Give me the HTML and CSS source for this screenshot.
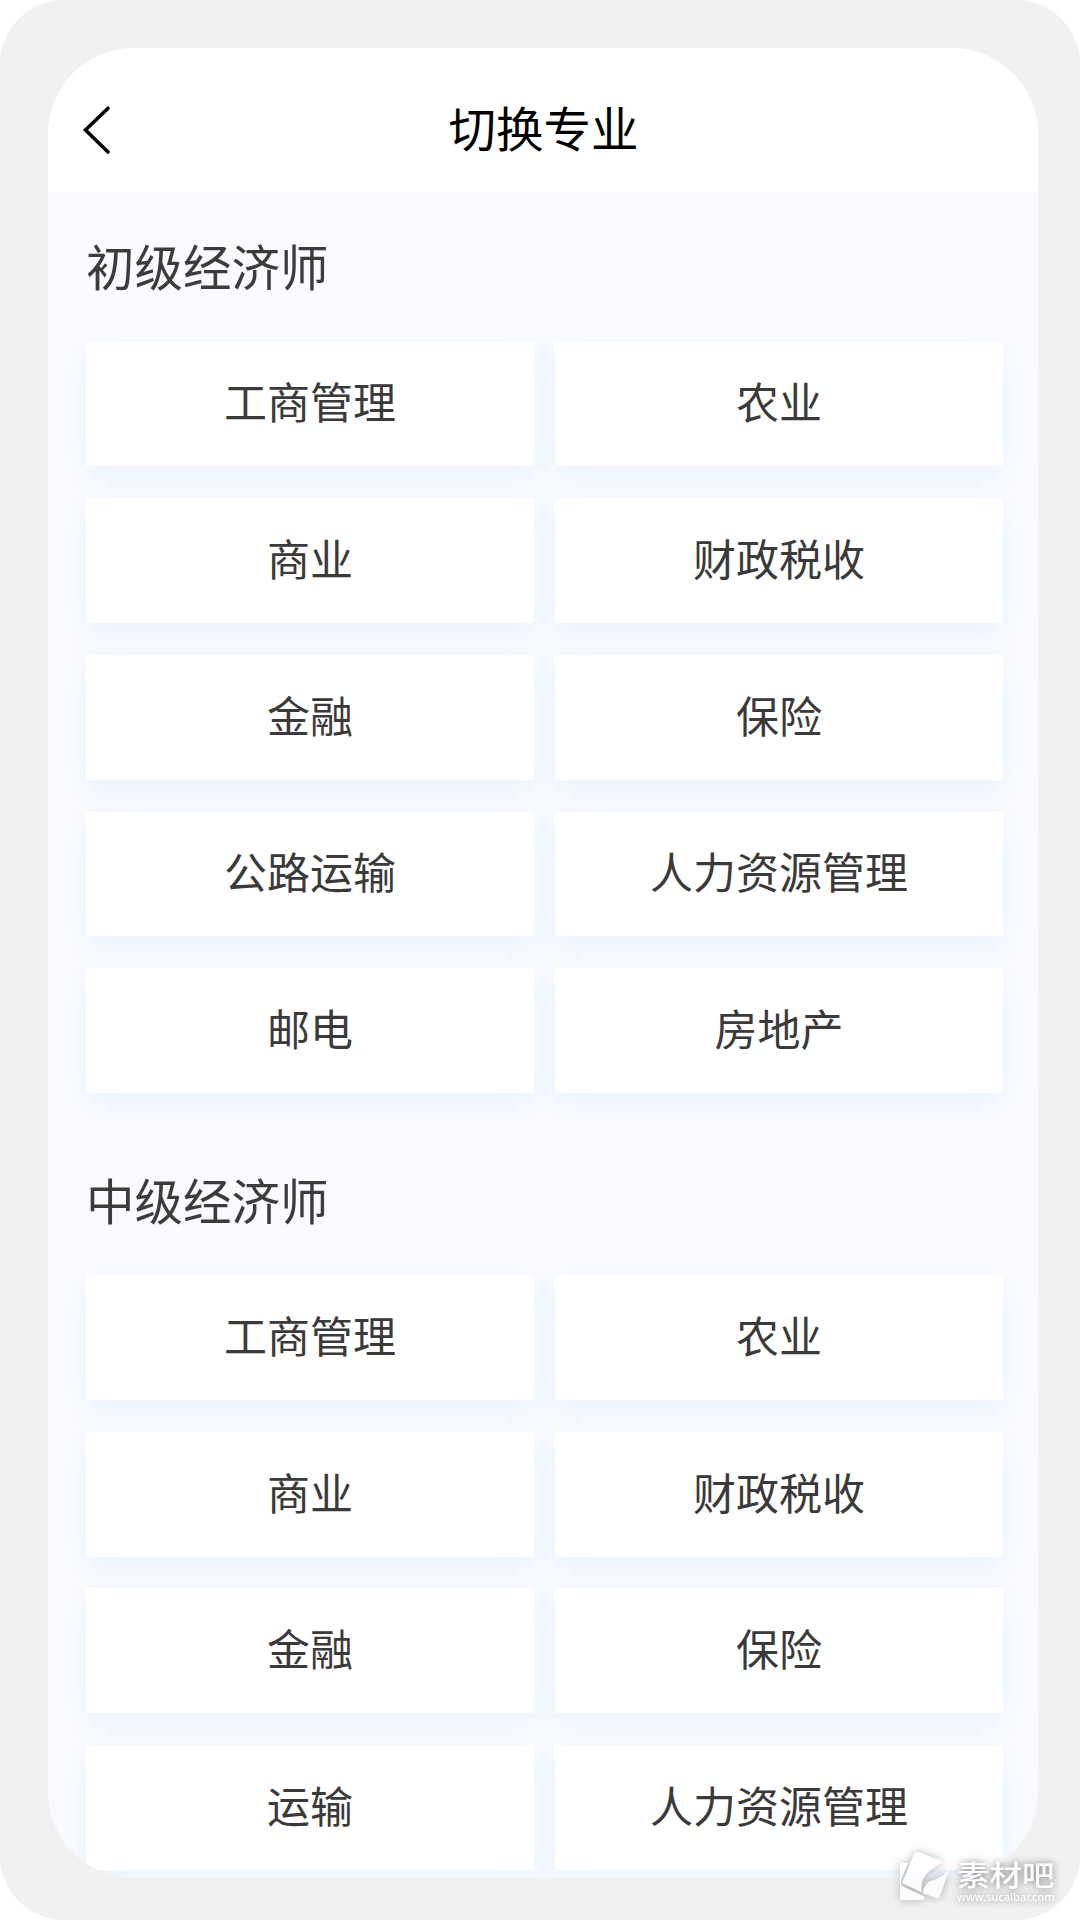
FILE: index.html
```html
<!DOCTYPE html>
<html lang="zh-CN">
<head>
<meta charset="utf-8">
<title>切换专业</title>
<link rel="stylesheet" href="styles.css">
</head>
<body>
<div class="stage">
  <main class="screen">
    <header class="header">
      <svg class="back" viewBox="0 0 30 50" fill="none" stroke="#000" stroke-width="3.6" stroke-linecap="round" stroke-linejoin="miter"><path d="M26 3.2 3.5 25 26 47"/></svg>
      <h1 class="title">切换专业</h1>
    </header>
    <section class="group">
      <h2 class="group-title">初级经济师</h2>
      <div class="grid">
        <div class="card">工商管理</div><div class="card">农业</div>
        <div class="card">商业</div><div class="card">财政税收</div>
        <div class="card">金融</div><div class="card">保险</div>
        <div class="card">公路运输</div><div class="card">人力资源管理</div>
        <div class="card">邮电</div><div class="card">房地产</div>
      </div>
    </section>
    <section class="group">
      <h2 class="group-title">中级经济师</h2>
      <div class="grid">
        <div class="card">工商管理</div><div class="card">农业</div>
        <div class="card">商业</div><div class="card">财政税收</div>
        <div class="card">金融</div><div class="card">保险</div>
        <div class="card">运输</div><div class="card">人力资源管理</div>
      </div>
    </section>
  </main>
  <div class="watermark">
    <svg class="mark" viewBox="0 0 52 52" fill="#fff"><path d="M0 14Q0 12 2 12H8L1 29Q0 33 2 35L25 46 23 49H2Q0 49 0 47Z"/><path d="M14 3Q15 0 18 1L40 9Q43 10 41 12L31 19Q20 26 21.500 41L4 33Q2 32 3 30Z"/><path d="M50 16 40 45Q39 48 36 47L23 42Q24 31 34 29 44 26 50 16Z"/></svg>
    <div class="brand">
      <span class="brand-name">素材吧</span>
      <span class="brand-url">www.sucaibar.com</span>
    </div>
  </div>
</div>
</body>
</html>
```
FILE: styles.css
```css
* { box-sizing: border-box; }
body {
  margin: 0;
  background: #fff;
  font-family: "Noto Sans CJK SC", sans-serif;
}
.stage {
  position: relative;
  width: 1080px;
  height: 1920px;
  padding: 48px 42px 42px 48px;
  background: #f1f1f1;
  border-radius: 64px;
  overflow: hidden;
}
.screen {
  height: 1830px;
  overflow: hidden;
  border-radius: 86px;
  background: #fafbff;
}
.header {
  display: grid;
  grid-template-columns: 60px 1fr 60px;
  align-items: center;
  height: 143px;
  padding: 20px 33px 0 34px;
  background: #fff;
}
.back { width: 30px; height: 50px; }
.title {
  margin: 0;
  padding-bottom: 6px;
  font-size: 47.5px;
  font-weight: 400;
  line-height: 60px;
  text-align: center;
  color: #000;
}
.group { padding: 39px 35px 0 38px; }
.group + .group { padding-top: 70.5px; }
.group-title {
  margin: 0 0 40px;
  font-size: 48.5px;
  font-weight: 400;
  line-height: 71.5px;
  color: #3c3c3c;
}
.grid {
  display: grid;
  grid-template-columns: 448px 448px;
  grid-auto-rows: 124.8px;
  gap: 31.9px 21px;
}
.card {
  display: flex;
  align-items: center;
  justify-content: center;
  padding-bottom: 7px;
  background: #fff;
  box-shadow: 0 9px 27px rgba(190, 225, 255, 0.28);
  font-size: 43px;
  line-height: 60px;
  color: #3a3a3a;
}
.watermark {
  position: absolute;
  left: 900px;
  top: 1851px;
  display: flex;
  gap: 5px;
  color: #fff;
  opacity: 0.82;
  filter: drop-shadow(0 0 5px rgba(0, 0, 0, 0.35));
}
.mark { width: 52px; height: 52px; }
.brand {
  display: flex;
  flex-direction: column;
  padding-top: 7px;
  text-shadow: 0 0 7px rgba(0, 0, 0, 0.3);
}
.brand-name {
  font-size: 32.5px;
  line-height: 31px;
  font-weight: 500;
  transform: scaleY(0.88);
}
.brand-url {
  padding-top: 1px;
  font-family: "Noto Sans", sans-serif;
  font-size: 11px;
  line-height: 13px;
  font-weight: 500;
}
```
